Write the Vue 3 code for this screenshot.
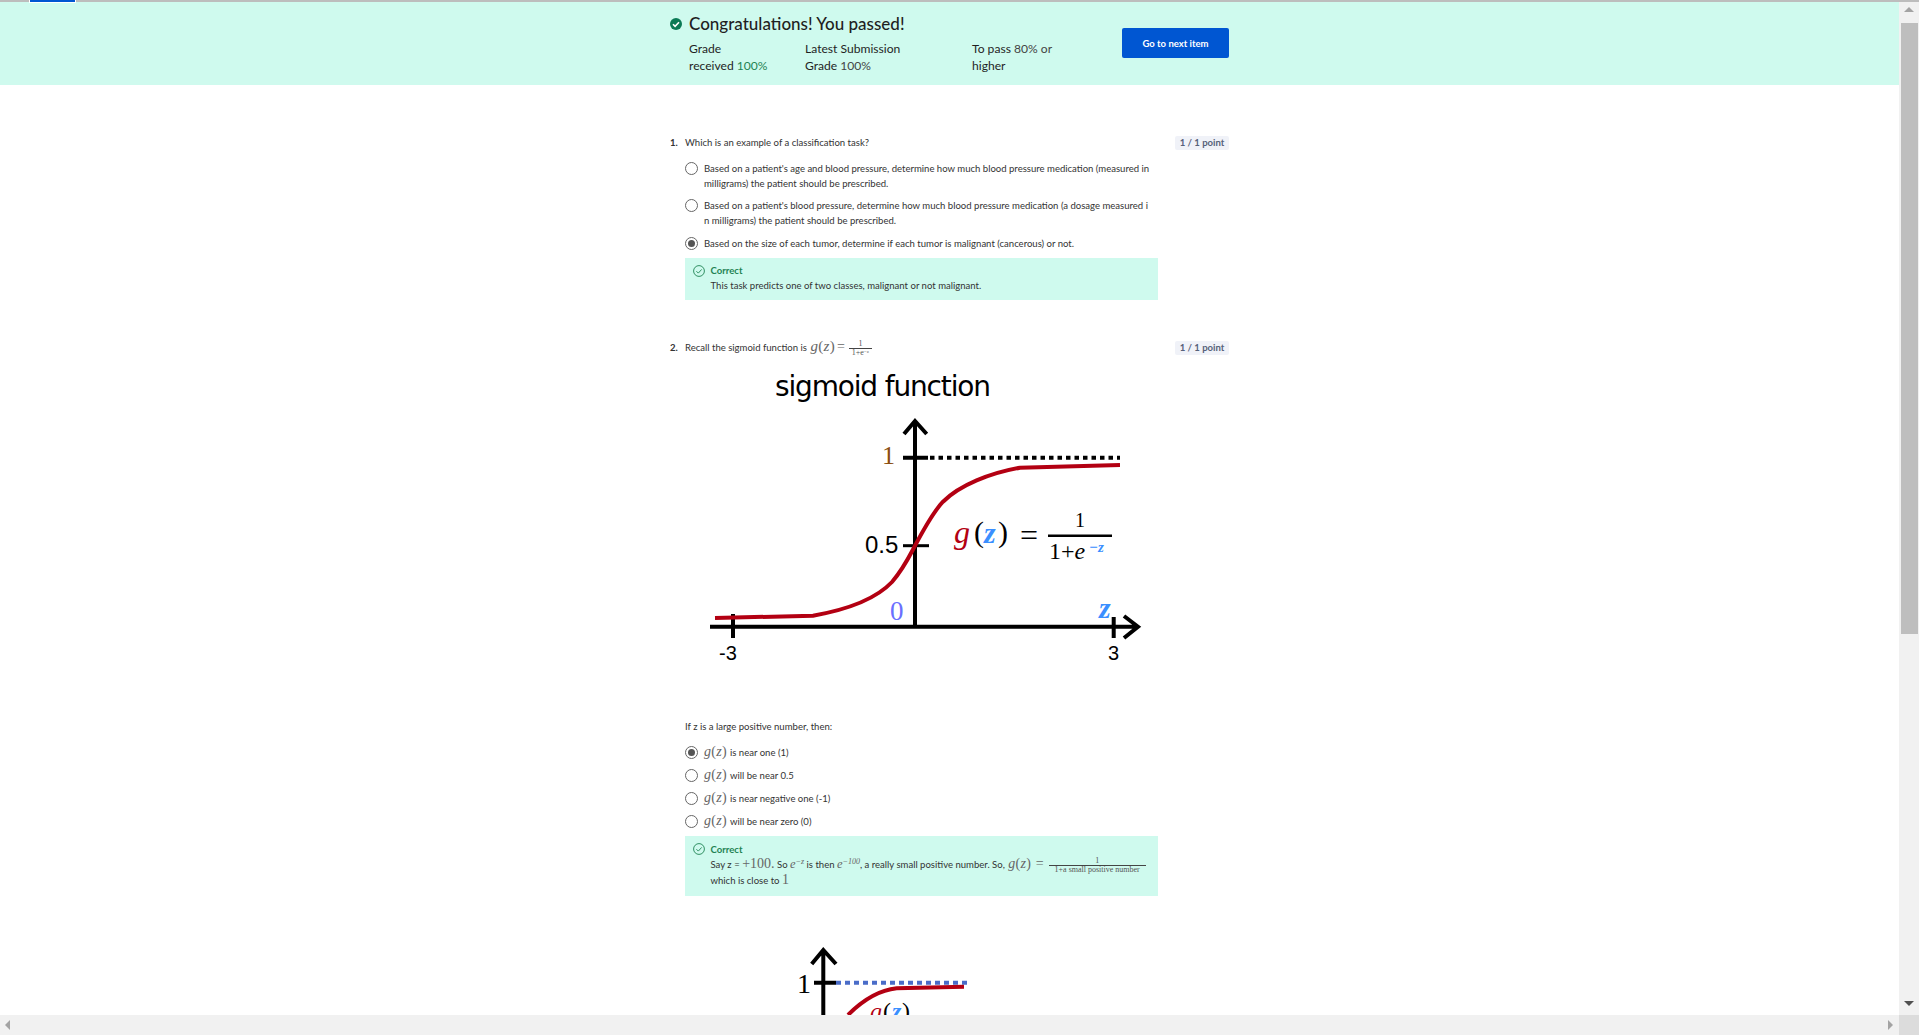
<template>
  <div class="shell">
    <div class="top-line"></div>
    <div class="tab"></div>
    <div class="view">
      <div class="content">
        <div class="banner">
          <div class="banner-inner">
            <div class="banner-left">
              <div class="title-row">
                <svg class="pass-icon" viewBox="0 0 14 14" width="14" height="14">
                  <circle cx="7" cy="7" r="6" fill="#0b7a55" />
                  <path d="M4 7.2l2.1 2.1L10 5.2" fill="none" stroke="#fff" stroke-width="1.6" />
                </svg>
                <span class="title">Congratulations! You passed!</span>
              </div>
              <div class="stats">
                <div class="stat s1">Grade<br>received <span class="green">100%</span></div>
                <div class="stat s2">Latest Submission<br>Grade <span class="light">100%</span></div>
                <div class="stat s3">To pass <span class="light">80% or</span><br>higher</div>
              </div>
            </div>
            <button class="next">Go to next item</button>
          </div>
        </div>

        <div class="column">
          <div class="q-head first">
            <span class="num">1.</span>
            <span class="q-text">Which is an example of a classification task?</span>
            <span class="badge">1 / 1 point</span>
          </div>
          <div class="options">
            <div v-for="o in q1Options" :key="o.lines[0]" class="opt">
              <span class="radio" :class="{ on: o.on }"></span>
              <span class="opt-text"><template v-for="(l, i) in o.lines" :key="i"><br v-if="i">{{ l }}</template></span>
            </div>
          </div>
          <div class="feedback f1">
            <div class="fb-head">
              <svg class="ok" viewBox="0 0 12 12" width="12" height="12">
                <circle cx="6" cy="6" r="5.4" fill="none" stroke="#1f8354" stroke-width="0.9" />
                <path d="M3.4 6.2l1.9 1.9 3.4-3.7" fill="none" stroke="#1f8354" stroke-width="0.9" />
              </svg>
              <span class="fb-title">Correct</span>
            </div>
            <div class="fb-body">This task predicts one of two classes, malignant or not malignant.</div>
          </div>

          <div class="q-head second">
            <span class="num">2.</span>
            <span class="q-text">Recall the sigmoid function is
              <span class="math gz head-gz"><i>g</i>(<i>z</i>)</span>
              <span class="math eq head-eq">=</span>
              <span class="frac small"><span class="n">1</span><span class="d">1+e<sup>−z</sup></span></span>
            </span>
            <span class="badge">1 / 1 point</span>
          </div>

          <svg class="plot" viewBox="0 0 500 320" width="500" height="320">
            <text x="95" y="36" class="plot-title" textLength="216">sigmoid function</text>
            <path d="M235 267V61M224 74L235 61L246.700 74" class="ax" />
            <path d="M30 266.700H458M444 256L458 266.700L444 278" class="ax" />
            <path d="M53 254V278M433.700 257V278M223 97.700H248" class="ax" />
            <path d="M223 185.700H249" class="ax thin" />
            <path d="M250 97.700H440" class="dots" />
            <path d="M35 258L133 255.700C165 250 195 240 212 222C224 208 230 195 235 185.700C246 165 255 150 263 141.700C280 125 310 113 340 107.700L440 105" class="red" />
            <text x="202" y="104" class="t serif brown s26">1</text>
            <text x="185" y="192.700" class="t sans">0.5</text>
            <text x="210" y="260" class="t serif violet s27">0</text>
            <text x="39" y="300" class="t sans s20">-3</text>
            <text x="428" y="300" class="t sans s20">3</text>
            <text x="419" y="258" class="t serif it sky bold s30">z</text>
            <text x="274" y="183" class="t serif it red-t s32">g</text>
            <text x="294" y="182" class="t serif s30">(</text>
            <text x="304" y="183" class="t serif it sky bold s30">z</text>
            <text x="318" y="182" class="t serif s30">)</text>
            <text x="340" y="186" class="t serif s32">=</text>
            <path d="M368 175.700H432" class="frac-line" />
            <text x="395" y="166.700" class="t serif s20">1</text>
            <text x="369" y="199" class="t serif s24">1+<tspan font-style="italic">e</tspan></text>
            <text x="409" y="191.700" class="t serif it sky s15 bold">−z</text>
          </svg>

          <div class="prompt">If z is a large positive number, then:</div>
          <div class="options math-opts">
            <div v-for="o in q2Options" :key="o.text" class="opt row">
              <span class="radio" :class="{ on: o.on }"></span>
              <span class="math gz"><i>g</i>(<i>z</i>)</span>
              <span class="opt-text">{{ o.text }}</span>
            </div>
          </div>
          <div class="feedback f2">
            <div class="fb-head">
              <svg class="ok" viewBox="0 0 12 12" width="12" height="12">
                <circle cx="6" cy="6" r="5.4" fill="none" stroke="#1f8354" stroke-width="0.9" />
                <path d="M3.4 6.2l1.9 1.9 3.4-3.7" fill="none" stroke="#1f8354" stroke-width="0.9" />
              </svg>
              <span class="fb-title">Correct</span>
            </div>
            <div class="fb-body line">
              Say z = <span class="math big">+100.</span> So <span class="math ex">e<sup>−z</sup></span> is then <span class="math ex">e<sup>−100</sup></span>, a really small positive number. So, <span class="math gz box-gz"><i>g</i>(<i>z</i>)</span> <span class="math eq box-eq">=</span>
              <span class="frac wide"><span class="n">1</span><span class="d">1+a small positive number</span></span>
            </div>
            <div class="fb-body line">which is close to <span class="math big">1</span></div>
          </div>

          <svg class="plot next-plot" viewBox="0 0 500 200" width="500" height="200">
            <path d="M143.300 90V20M131.700 34L143.300 20L156 34M134 52.700H156" class="ax" />
            <path d="M156 52.700H287" class="dots blue" />
            <path d="M168 85C185 68 200 60 216.700 58.300L284 56.700" class="red" />
            <text x="117" y="63" class="t serif s28">1</text>
            <text x="190" y="89" class="t serif it red-t">g</text>
            <text x="203" y="89" class="t serif">(</text>
            <text x="212" y="89" class="t serif it sky bold">z</text>
            <text x="222" y="89" class="t serif">)</text>
          </svg>
        </div>
      </div>
      <div class="vbar">
        <span class="arrow up"></span>
        <div class="thumb"></div>
        <span class="arrow down"></span>
      </div>
    </div>
    <div class="hbar">
      <div class="htrack">
        <span class="arrow left"></span>
        <span class="arrow right"></span>
      </div>
      <div class="corner"></div>
    </div>
  </div>
</template>

<script setup>
const q1Options = [
  { lines: ["Based on a patient's age and blood pressure, determine how much blood pressure medication (measured in", "milligrams) the patient should be prescribed."] },
  { lines: ["Based on a patient's blood pressure, determine how much blood pressure medication (a dosage measured i", "n milligrams) the patient should be prescribed."] },
  { lines: ["Based on the size of each tumor, determine if each tumor is malignant (cancerous) or not."], on: true },
]

const q2Options = [
  { text: "is near one (1)", on: true },
  { text: "will be near 0.5" },
  { text: "is near negative one (-1)" },
  { text: "will be near zero (0)" },
]
</script>

<style>
html, body { margin: 0; overflow: hidden; background: #fff; }
</style>

<style scoped>
.shell {
  position: relative;
  width: 1919px;
  height: 1035px;
  display: flex;
  flex-direction: column;
  overflow: hidden;
  font-family: Lato, "Liberation Sans", sans-serif;
  color: #1f1f1f;
}
.top-line { height: 2px; background: #bdbdbd; flex: none; }
.tab {
  position: absolute;
  left: 30px;
  top: 0;
  width: 45px;
  height: 2px;
  background: #0056d2;
  box-shadow: 0 0 0 1px #fff;
}
.view { flex: 1; display: flex; min-height: 0; }
.content { flex: 1; overflow: hidden; background: #fff; }

.banner { height: 83px; background: #cffaee; }
.banner-inner {
  width: 561px;
  margin: 0 auto;
  display: flex;
  justify-content: space-between;
  padding-top: 9.500px;
}
.title-row { display: flex; align-items: center; height: 24px; gap: 6px; }
.pass-icon { flex: none; }
.title { font-size: 17px; font-weight: 500; white-space: nowrap; }
.stats { display: flex; padding-left: 20px; font-size: 12.100px; line-height: 17px; margin-top: 4.500px; }
.s1 { width: 116px; }
.s2 { width: 167px; }
.s3 { width: 110px; }
.green { color: #1f8354; }
.light { color: #444; }
.next {
  margin-top: 16.500px;
  margin-right: 1px;
  width: 107px;
  height: 30px;
  border: 0;
  border-radius: 2px;
  background: #0056d2;
  color: #fff;
  font-family: inherit;
  font-size: 9.500px;
  font-weight: 700;
}

.column { width: 561px; margin: 0 auto; font-size: 9.550px; line-height: 15px; color: #333; }
.q-head { display: flex; align-items: center; height: 14px; }
.q-head.first { margin-top: 51px; }
.q-head.second { margin-top: 41px; }
.num { width: 16px; padding-left: 1px; padding-bottom: 2px; box-sizing: border-box; font-weight: 700; flex: none; }
.q-text { flex: 1; white-space: nowrap; padding-bottom: 2px; }
.badge {
  flex: none;
  width: 54px;
  margin-right: 1px;
  height: 14px;
  line-height: 14px;
  text-align: center;
  background: #f0f2f8;
  border-radius: 2px;
  color: #56617a;
  font-weight: 700;
}
.options { padding-left: 15.500px; margin-top: 11px; display: flex; flex-direction: column; gap: 7px; }
.opt { display: flex; align-items: flex-start; white-space: nowrap; }
.opt:nth-child(2) { margin-bottom: 1px; }
.radio {
  flex: none;
  width: 13px;
  height: 13px;
  box-sizing: border-box;
  border: 1.500px solid #666;
  border-radius: 50%;
  background: #fff;
  margin-right: 6.500px;
  margin-top: 1px;
  position: relative;
}
.radio.on::after {
  content: "";
  position: absolute;
  inset: 2px;
  border-radius: 50%;
  background: #555;
}
.feedback { margin-left: 16px; width: 473px; background: #cffaee; box-sizing: border-box; padding-left: 7.500px; }
.f1 { margin-top: 7px; height: 42px; padding-top: 5px; }
.f2 { margin-top: 3.500px; height: 60px; padding-top: 5.500px; }
.fb-head { display: flex; align-items: center; gap: 6px; height: 15px; }
.fb-title { color: #1f8354; font-weight: 700; }
.fb-body { padding-left: 18px; white-space: nowrap; }
.fb-body.line { height: 16.500px; line-height: 15px; }

.math { font-family: "Liberation Serif", serif; color: #666; line-height: 1; }
.gz { font-size: 14px; letter-spacing: 0.300px; }
.head-gz { font-size: 15px; margin-left: 1px; }
.head-eq { font-size: 15px; margin-left: 2px; }
.box-gz { margin-left: 1px; }
.box-eq { margin-left: 2px; }
.eq { font-size: 14px; }
.big { font-size: 14px; }
.ex { font-style: italic; font-size: 12.500px; }
sup { font-size: 8px; line-height: 0; vertical-align: 4px; }
.frac {
  display: inline-flex;
  flex-direction: column;
  align-items: center;
  vertical-align: middle;
  font-family: "Liberation Serif", serif;
  color: #555;
  line-height: 1;
  margin-top: -4px;
  margin-bottom: -4px;
}
.frac .n { border-bottom: 1px solid #444; width: 100%; text-align: center; }
.frac.small { font-size: 8px; width: 23px; margin-left: 4px; }
.frac.small sup { font-size: 5px; vertical-align: 2px; }
.frac.wide { font-size: 8px; width: 97px; margin-left: 5px; }
.frac.wide .d { white-space: nowrap; }

.plot { display: block; margin-left: 11px; margin-top: 5px; }
.next-plot { margin-top: 34px; }
.plot-title { font-family: "DejaVu Sans", sans-serif; font-size: 28px; fill: #000; }
.ax { fill: none; stroke: #000; stroke-width: 4; }
.ax.thin { stroke-width: 3; }
.dots { fill: none; stroke: #000; stroke-width: 4; stroke-dasharray: 4.500 4; }
.dots.blue { stroke: #4a6cc8; stroke-width: 4; stroke-dasharray: 5 4; }
.red { fill: none; stroke: #b30012; stroke-width: 4; }
.frac-line { stroke: #000; stroke-width: 2.500; }
.t { font-size: 24px; fill: #000; }
.serif { font-family: "Liberation Serif", serif; }
.sans { font-family: "Liberation Sans", sans-serif; }
.it { font-style: italic; }
.bold { font-weight: 700; }
.brown { fill: #8b4e10; }
.violet { fill: #6a6fff; }
.sky { fill: #3a8fff; }
.red-t { fill: #b30012; }
.s15 { font-size: 15px; }
.s20 { font-size: 20px; }
.s24 { font-size: 24px; }
.s26 { font-size: 26px; }
.s27 { font-size: 27px; }
.s28 { font-size: 28px; }
.s30 { font-size: 30px; }
.s32 { font-size: 32px; }

.prompt { margin-top: 39px; padding-left: 16px; }
.math-opts { margin-top: 6.500px; gap: 0; }
.opt.row { height: 23px; align-items: center; margin-bottom: 0; }
.opt.row .radio { margin-top: 0; }
.opt.row .gz { margin-right: 3px; }

.vbar { position: relative; flex: none; width: 20px; background: #f1f1f1; }
.thumb { position: absolute; left: 2px; right: 1px; top: 21px; height: 611px; background: #bebebe; }
.hbar { flex: none; height: 20px; display: flex; }
.htrack { position: relative; flex: 1; background: #f1f1f1; }
.corner { flex: none; width: 20px; background: #dcdcdc; }
.arrow { position: absolute; width: 0; height: 0; border: 5px solid transparent; }
.up { left: 5px; top: 5px; border-bottom-color: #a3a3a3; border-top-width: 0; }
.down { left: 5px; bottom: 9px; border-top-color: #505050; border-bottom-width: 0; }
.left { left: 5px; top: 5px; border-right-color: #a3a3a3; border-left-width: 0; }
.right { right: 6px; top: 5px; border-left-color: #a3a3a3; border-right-width: 0; }
</style>
